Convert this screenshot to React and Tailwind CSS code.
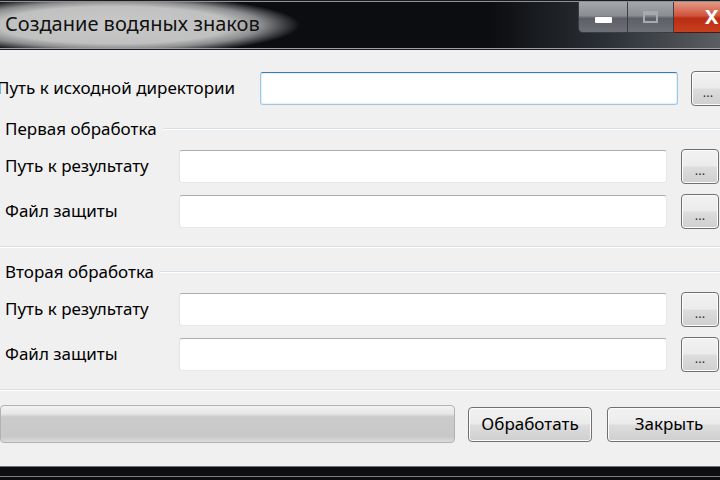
import React from 'react'

const font = { fontFamily: '"Segoe UI", "Noto Sans", "Liberation Sans", sans-serif' }

const BrowseButton = ({ className }) => (
  <div
    className={
      'shrink-0 h-[35px] rounded-[4px] border border-[#707070] bg-[linear-gradient(#f2f2f2_0%,#ebebeb_48%,#dddddd_52%,#cfcfcf_100%)] shadow-[inset_0_0_0_1px_#fcfcfc] flex items-end justify-center pb-[6px] text-[13px] leading-none text-[#333] ' +
      className
    }
  >
    ...
  </div>
)

const Field = ({ className, focused }) => (
  <div
    className={
      'shrink-0 h-[33px] bg-white rounded-[3px] border ' +
      (focused
        ? 'border-[#9ec7e6] border-t-[#3d7bad] shadow-[inset_0_0_0_1px_#e6f0fa] '
        : 'border-[#e3e9ef] border-t-[#abadb3] border-l-[#e2e3ea] ') +
      className
    }
  />
)

const GroupLine = () => (
  <div className="flex-1 flex flex-col">
    <div className="h-px bg-[#d5dfe5]" />
    <div className="h-px bg-white" />
  </div>
)

const GroupRow = ({ label }) => (
  <div className="flex items-center h-[36px] pl-[5px]">
    <div className="w-[174px] shrink-0 text-[17px] text-black">{label}</div>
    <Field className="w-[488px]" />
    <BrowseButton className="ml-[14px] w-[38px]" />
  </div>
)

const Group = ({ title, children, className }) => (
  <div className={'flex flex-col ' + className}>
    <div className="flex items-center h-[20px] pl-[5px]">
      <span className="text-[17px] text-black pr-[6px]">{title}</span>
      <GroupLine />
    </div>
    <div className="flex flex-col gap-[9px] mt-[9px]">{children}</div>
    <div className="mt-[17px] flex">
      <GroupLine />
    </div>
  </div>
)

export default function App() {
  return (
    <div className="w-[720px] h-[480px] overflow-hidden flex flex-col bg-[#f0f0f0]" style={font}>
      {/* title bar */}
      <div className="h-[50px] shrink-0 flex flex-col bg-[#0b0d10]">
        <div className="h-px bg-[#1c1c1c]" />
        <div className="h-px bg-[#8d9094]" />
        <div className="flex-1 flex bg-[linear-gradient(to_right,#0b0d10_0%,#0b0d10_68%,#2b3036_84%,#5b5f64_100%)]">
          <div className="flex-1 flex items-center pl-[5px] bg-[radial-gradient(ellipse_210px_34px_at_115px_23px,#c9c9c9_0%,#c0c0c0_55%,#8a8b8d_70%,rgba(11,13,16,0)_88%)]">
            <span className="text-[20px] text-[#111] -mt-[3px]">Создание водяных знаков</span>
          </div>
          <div className="flex items-start">
            <div className="w-[50px] h-[31px] rounded-bl-[5px] border border-t-0 border-[#3a3d42] bg-[linear-gradient(#a4a7ab_0%,#8a8e93_45%,#5c6066_55%,#6d7177_100%)] flex items-center justify-center">
              <div className="w-[17px] h-[6px] bg-white mt-[6px] rounded-[1px]" />
            </div>
            <div className="w-[46px] h-[31px] border-b border-r border-[#3a3d42] bg-[linear-gradient(#a4a7ab_0%,#8a8e93_45%,#5c6066_55%,#6d7177_100%)] flex items-center justify-center">
              <div className="w-[15px] h-[12px] border-2 border-[#a8abae] border-t-[4px]" />
            </div>
            <div className="w-[46px] h-[31px] border-b border-[#4a1a14] bg-[linear-gradient(#e39a86_0%,#d0553d_45%,#b92d15_55%,#c8401f_100%)] flex items-center pl-[31px]">
              <span className="text-white font-bold text-[20px] leading-none">X</span>
            </div>
          </div>
        </div>
        <div className="h-px bg-[#9aa0a6]" />
        <div className="h-px bg-[#1a1c1f]" />
      </div>

      {/* body */}
      <div className="flex-1 flex flex-col pt-[20px]">
        <div className="flex items-center h-[36px] -ml-[3px]">
          <div className="w-[263px] shrink-0 text-[17px] text-black whitespace-nowrap">Путь к исходной директории</div>
          <Field className="w-[418px]" focused />
          <BrowseButton className="ml-[13px] w-[34px]" />
        </div>

        <Group title="Первая обработка" className="mt-[13px]">
          <GroupRow label="Путь к результату" />
          <GroupRow label="Файл защиты" />
        </Group>

        <Group title="Вторая обработка" className="mt-[14px]">
          <GroupRow label="Путь к результату" />
          <GroupRow label="Файл защиты" />
        </Group>

        <div className="flex items-center h-[38px] mt-[14px]">
          <div className="shrink-0 w-[455px] h-[38px] rounded-[4px] border border-[#b2b2b2] bg-[linear-gradient(#f3f3f3_0%,#e6e6e6_22%,#cbcbcb_30%,#c8c8c8_85%,#dcdcdc_100%)]" />
          <div className="shrink-0 ml-[13px] h-[35px] w-[124px] rounded-[4px] border border-[#707070] bg-[linear-gradient(#f2f2f2_0%,#ebebeb_48%,#dddddd_52%,#cfcfcf_100%)] shadow-[inset_0_0_0_1px_#fcfcfc] flex items-center justify-center text-[17px] text-black">
            Обработать
          </div>
          <div className="shrink-0 ml-[15px] h-[35px] w-[124px] rounded-[4px] border border-[#707070] bg-[linear-gradient(#f2f2f2_0%,#ebebeb_48%,#dddddd_52%,#cfcfcf_100%)] shadow-[inset_0_0_0_1px_#fcfcfc] flex items-center justify-center text-[17px] text-black">
            Закрыть
          </div>
        </div>
      </div>

      {/* bottom frame */}
      <div className="h-[14px] shrink-0 flex flex-col bg-[#0c0d0f]">
        <div className="h-px bg-[#6f7378]" />
        <div className="h-[9px]" />
        <div className="h-px bg-[#7d8084]" />
      </div>
    </div>
  )
}
